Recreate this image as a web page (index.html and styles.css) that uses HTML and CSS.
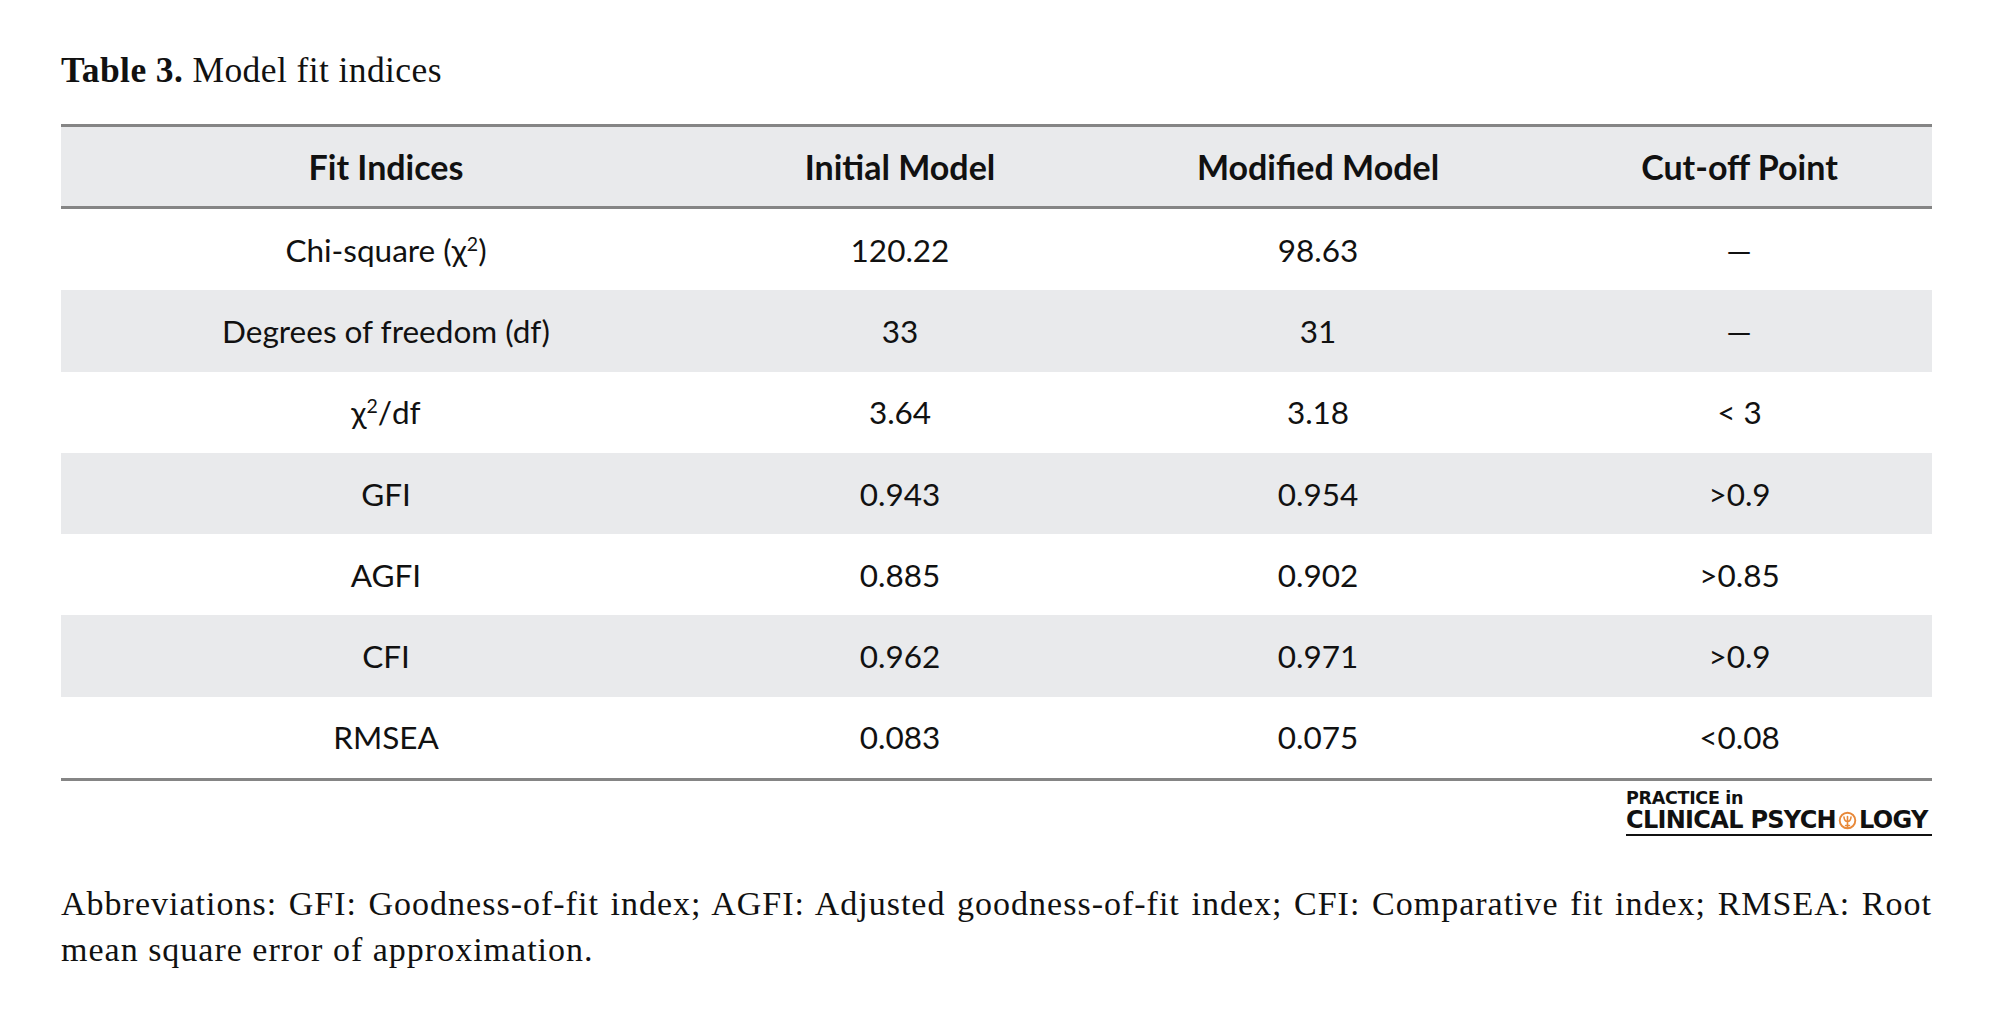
FILE: index.html
```html
<!DOCTYPE html>
<html lang="en">
<head>
<meta charset="utf-8">
<title>Table 3. Model fit indices</title>
<link rel="stylesheet" href="styles.css">
</head>
<body>
<div class="page">
  <p class="caption"><b>Table 3.</b> Model fit indices</p>
  <table class="fit">
    <colgroup>
      <col class="c1"><col class="c2"><col class="c3"><col class="c4">
    </colgroup>
    <thead>
      <tr><th>Fit Indices</th><th>Initial Model</th><th>Modified Model</th><th>Cut-off Point</th></tr>
    </thead>
    <tbody>
      <tr><td>Chi-square (χ<sup>2</sup>)</td><td>120.22</td><td>98.63</td><td><span class="dash">–</span></td></tr>
      <tr class="alt"><td>Degrees of freedom (df)</td><td>33</td><td>31</td><td><span class="dash">–</span></td></tr>
      <tr><td>χ<sup>2</sup>/df</td><td>3.64</td><td>3.18</td><td>&lt; 3</td></tr>
      <tr class="alt"><td>GFI</td><td>0.943</td><td>0.954</td><td>&gt;0.9</td></tr>
      <tr><td>AGFI</td><td>0.885</td><td>0.902</td><td>&gt;0.85</td></tr>
      <tr class="alt"><td>CFI</td><td>0.962</td><td>0.971</td><td>&gt;0.9</td></tr>
      <tr class="last"><td>RMSEA</td><td>0.083</td><td>0.075</td><td>&lt;0.08</td></tr>
    </tbody>
  </table>
  <div class="brand-row">
    <div class="brand">
      <div class="brand-top">PRACTICE in</div>
      <div class="brand-main">CLINICAL PSYCH<svg class="brand-o" viewBox="0 0 20 20" aria-hidden="true"><circle cx="10" cy="10" r="8.2" fill="none" stroke="#e8893a" stroke-width="2"/><path d="M6.3 6.3 C6.6 9.8 8 11 10 11 C12 11 13.4 9.8 13.7 6.3 M10 5.8 V17 M8 15.2 H12" fill="none" stroke="#e8893a" stroke-width="1.7" stroke-linecap="round"/></svg>LOGY</div>
    </div>
  </div>
  <p class="notes">Abbreviations: GFI: Goodness-of-fit index; AGFI: Adjusted goodness-of-fit index; CFI: Comparative fit index; RMSEA: Root mean square error of approximation.</p>
</div>
</body>
</html>
```
FILE: styles.css
```css
html, body {
  margin: 0;
  padding: 0;
  background: #ffffff;
}
.page {
  padding: 49px 68px 0 61px;
  color: #111111;
}
.caption {
  margin: 0;
  font-family: "Liberation Serif", "Times New Roman", serif;
  font-size: 35.5px;
  line-height: 42px;
  letter-spacing: 0.4px;
}
.caption b {
  font-weight: bold;
}
.fit {
  margin-top: 33px;
  width: 100%;
  border-collapse: collapse;
  table-layout: fixed;
  font-family: Lato, "Liberation Sans", sans-serif;
  font-size: 31.5px;
}
.c1 { width: 650px; }
.c2 { width: 378px; }
.c3 { width: 458px; }
.c4 { width: 385px; }
.fit thead tr {
  background: #e9eaec;
  border-top: 3px solid #858585;
  border-bottom: 3px solid #858585;
}
.fit th {
  height: 79px;
  padding: 0;
  font-size: 34px;
  font-weight: bold;
  text-align: center;
}
.fit td {
  height: 81.3px;
  padding: 0;
  text-align: center;
}
.fit tr.alt {
  background: #e9eaec;
}
.fit tr.last {
  border-bottom: 3px solid #858585;
}
.fit sup {
  font-size: 0.62em;
  line-height: 0;
  vertical-align: 0.55em;
}
.dash {
  display: inline-block;
  transform: scaleX(1.7);
}
.brand-row {
  display: flex;
  justify-content: flex-end;
  padding-top: 8px;
}
.brand {
  display: flex;
  flex-direction: column;
  width: 306px;
  font-family: "DejaVu Sans", sans-serif;
  font-weight: bold;
  color: #111111;
}
.brand-top {
  font-size: 17.5px;
  line-height: 19px;
  letter-spacing: -0.3px;
}
.brand-main {
  display: flex;
  align-items: center;
  font-size: 24px;
  line-height: 24px;
  letter-spacing: -0.7px;
  border-bottom: 2px solid #111111;
  padding-bottom: 2px;
}
.brand-o {
  width: 19px;
  height: 19px;
  margin: 0 2px 0 2px;
}
.notes {
  margin: 45px 0 0 0;
  font-family: "Liberation Serif", "Times New Roman", serif;
  font-size: 34px;
  line-height: 46px;
  letter-spacing: 1px;
  text-align: justify;
}
```
